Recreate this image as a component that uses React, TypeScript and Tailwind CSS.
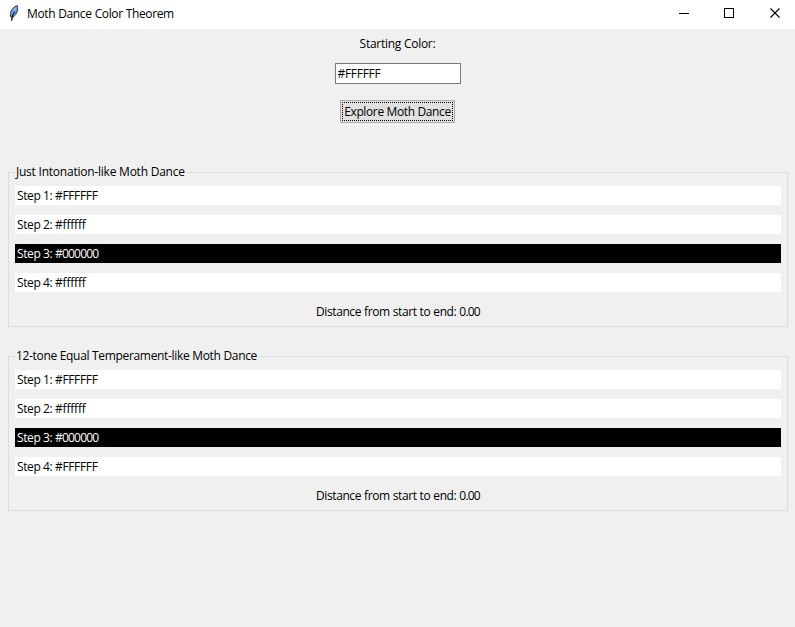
import React from "react";

type Step = { name: string; color: string; dark?: boolean; tracking: string };

function Feather() {
  return (
    <svg width="10" height="17" viewBox="0 0 10 17" className="block" aria-hidden="true">
      <path d="M8.3 0.7 C5.2 1.4 1.6 5 1.5 8.5 L1.6 11.8 L3.4 12.6 C7 10.5 9.6 5.5 8.3 0.7Z" fill="#5a9fe8" stroke="#33383d" strokeWidth="1" />
      <path d="M7.2 2.6 C5.2 4.6 3.6 7.4 3 10" fill="none" stroke="#a4cdf5" strokeWidth="1.1" />
      <path d="M5.4 6.5 C3.8 9 2.8 12 2.6 15.8" fill="none" stroke="#111" strokeWidth="1.3" />
    </svg>
  );
}

function TitleBar() {
  return (
    <header className="flex h-[29px] items-center bg-white">
      <div className="ml-[9px] mt-[-3px] w-[18px]"><Feather /></div>
      <h1 className="mt-[-1px] flex-1 leading-4 tracking-[-0.37px] [word-spacing:0.3px]">Moth Dance Color Theorem</h1>
      <div className="flex h-full items-start gap-[35px] pr-[14px] pt-2">
        <button className="w-[10px]" aria-label="Minimize">
          <svg className="block" width="10" height="11" shapeRendering="crispEdges"><path d="M0 5.5H10" stroke="#000" /></svg>
        </button>
        <button className="w-[11px]" aria-label="Maximize">
          <svg className="block" width="11" height="11" shapeRendering="crispEdges"><rect x="0.5" y="0.5" width="9" height="9" fill="none" stroke="#000" /></svg>
        </button>
        <button className="w-[11px]" aria-label="Close">
          <svg className="block" width="11" height="11"><path d="M0.5 0.5L9.5 9.5M9.5 0.5L0.5 9.5" stroke="#000" strokeWidth="1.1" /></svg>
        </button>
      </div>
    </header>
  );
}

function Group({ title, tracking, steps }: { title: string; tracking: string; steps: Step[] }) {
  return (
    <section className="mx-[8px] h-[155px] w-[780px] border border-[#dcdcdc] px-[6px]">
      <h2 className={`mt-[-9px] h-4 w-fit bg-[#f0f0f0] pl-px pr-0.5 leading-4 ${tracking}`}>{title}</h2>
      <div className="mt-[6px] flex flex-col gap-[10px]">
        {steps.map((s) => (
          <div key={s.name} className={`h-[19px] pl-[2px] leading-[19px] ${s.dark ? "bg-black text-white" : "bg-white"}`}>
            <span className="tracking-[-0.4px]">{s.name}: </span>
            <span className={s.tracking}>{s.color}</span>
          </div>
        ))}
        <p className="h-[19px] text-center leading-[19px] tracking-[-0.42px] [word-spacing:0.4px]">
          Distance from start to end: <span className="tracking-[-0.8px]">0.00</span>
        </p>
      </div>
    </section>
  );
}

const just: Step[] = [
  { name: "Step 1", color: "#FFFFFF", tracking: "tracking-[-0.35px]" },
  { name: "Step 2", color: "#ffffff", tracking: "tracking-[-0.2px]" },
  { name: "Step 3", color: "#000000", dark: true, tracking: "tracking-[-0.8px]" },
  { name: "Step 4", color: "#ffffff", tracking: "tracking-[-0.2px]" },
];
const equal: Step[] = [
  ...just.slice(0, 3),
  { name: "Step 4", color: "#FFFFFF", tracking: "tracking-[-0.35px]" },
];

export default function App() {
  return (
    <div className="h-[627px] w-[795px] overflow-hidden whitespace-nowrap bg-[#f0f0f0] font-['Open_Sans','Noto_Sans',sans-serif] text-[12px] text-black">
      <TitleBar />
      <main>
        <div className="flex flex-col items-center pt-[5px]">
          <label htmlFor="color" className="h-[19px] leading-[19px] tracking-[-0.27px]">Starting Color:</label>
          <input id="color" defaultValue="#FFFFFF" className="mt-[10px] h-[21px] w-[126px] border border-[#7a7a7a] bg-white pl-[2px] tracking-[-0.3px] outline-none" />
          <button className="mt-4 flex h-[23px] w-[115px] border border-[#adadad] bg-[#e1e1e1] p-px">
            <span className="flex h-full w-full items-center justify-center border border-dotted border-black leading-none tracking-[-0.37px]">Explore Moth Dance</span>
          </button>
        </div>
        <div className="mt-[49px] flex flex-col gap-[29px]">
          <Group title="Just Intonation-like Moth Dance" tracking="tracking-[-0.23px]" steps={just} />
          <Group title="12-tone Equal Temperament-like Moth Dance" tracking="tracking-[-0.32px]" steps={equal} />
        </div>
      </main>
    </div>
  );
}
